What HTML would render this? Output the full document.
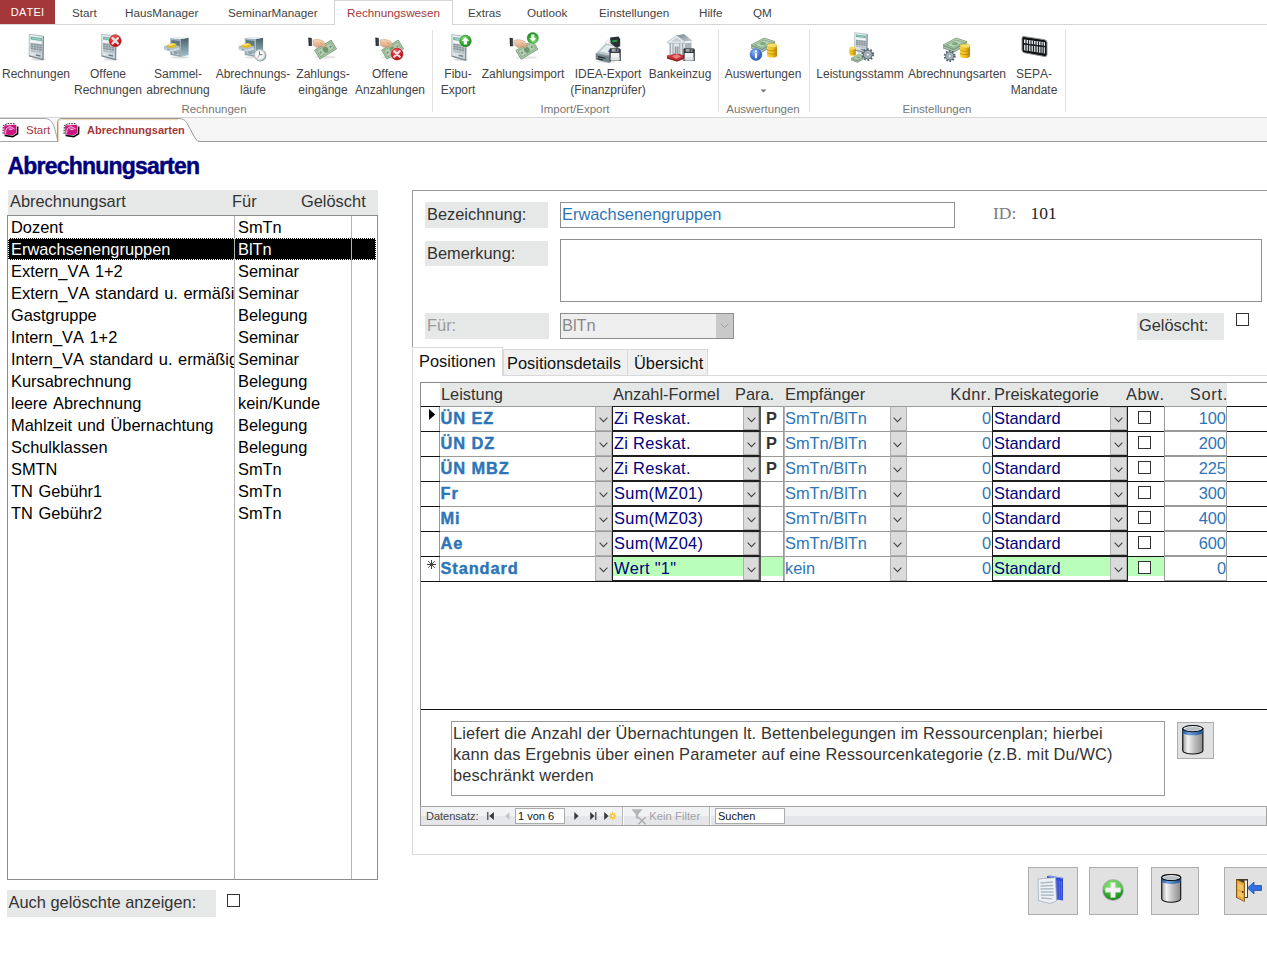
<!DOCTYPE html>
<html>
<head>
<meta charset="utf-8">
<title>Abrechnungsarten</title>
<style>
*{box-sizing:border-box;margin:0;padding:0}
html,body{width:1267px;height:979px;overflow:hidden;background:#fff}
body{font-family:"Liberation Sans",sans-serif;color:#1a1a1a;position:relative;font-kerning:none}
.abs{position:absolute}
/* ribbon */
#rtabs{position:absolute;left:0;top:0;width:1267px;height:25px;border-bottom:1px solid #d4d4d4;background:#fff}
#rtabs span{position:absolute;top:0;height:24px;line-height:25px;font-size:11.7px;color:#444;white-space:nowrap}
#datei{left:0;width:55px;background:#a4373a;color:#fff !important;text-align:center;font-size:11px !important;letter-spacing:0.2px}
#rsel{position:absolute;left:334px;top:0;width:119px;height:26px;border:1px solid #d4d4d4;border-bottom:none;background:#fff}
#ribbon{position:absolute;left:0;top:25px;width:1267px;height:93px;background:#fff}
.rb{position:absolute;top:49px;font-size:12px;line-height:16px;color:#444;text-align:center;white-space:nowrap;transform:translateX(-50%)}
.rg{position:absolute;top:101px;font-size:11.5px;line-height:16px;color:#777;text-align:center;white-space:nowrap;transform:translateX(-50%)}
.rsep{position:absolute;top:30px;width:1px;height:82px;background:#e1e1e1}
.ric{position:absolute;top:32px;width:32px;height:32px}
/* doc tabs */
#dtabs{position:absolute;left:0;top:117px;width:1267px;height:25px;background:#f6f6f6;border-top:1px solid #d6d6d6;border-bottom:1px solid #9b9b9b}
/* form */
.lbl{position:absolute;background:#e6e8e7;font-size:16px;line-height:25px;height:25px;color:#333;padding-left:2px;white-space:nowrap}
.t16{font-size:16px;white-space:nowrap}
</style>
</head>
<body>

<!-- RIBBON TABS -->
<div id="rtabs">
  <span id="datei">DATEI</span>
  <span style="left:72px">Start</span>
  <span style="left:125px">HausManager</span>
  <span style="left:228px">SeminarManager</span>
  <span style="left:599px;display:none"></span>
  <span style="left:468px">Extras</span>
  <span style="left:527px">Outlook</span>
  <span style="left:599px">Einstellungen</span>
  <span style="left:699px">Hilfe</span>
  <span style="left:753px">QM</span>
</div>
<div id="rsel"></div>
<span class="abs" style="left:347px;top:0;height:24px;line-height:25px;font-size:11.7px;color:#a4373a;white-space:nowrap">Rechnungswesen</span>

<!-- RIBBON BODY -->
<div id="ribbon"></div>
<!--RIBBON-ITEMS-START-->
<svg width="0" height="0" style="position:absolute">
<defs>
<linearGradient id="gDoc" x1="0" y1="0" x2="1" y2="1"><stop offset="0" stop-color="#f4f7f8"/><stop offset="1" stop-color="#c4cdd1"/></linearGradient>
<linearGradient id="gCab" x1="0" y1="0" x2="1" y2="0"><stop offset="0" stop-color="#c9d6db"/><stop offset="1" stop-color="#5d7983"/></linearGradient>
<linearGradient id="gCabR" x1="0" y1="0" x2="0" y2="1"><stop offset="0" stop-color="#465d67"/><stop offset="1" stop-color="#a6c6d2"/></linearGradient>
<linearGradient id="gCabF" x1="0" y1="0" x2="0" y2="1"><stop offset="0" stop-color="#dfe7ea"/><stop offset="1" stop-color="#9fb0b7"/></linearGradient>
<radialGradient id="gRed" cx="0.4" cy="0.3" r="0.8"><stop offset="0" stop-color="#f46a6a"/><stop offset="0.6" stop-color="#d8141c"/><stop offset="1" stop-color="#a80d12"/></radialGradient>
<radialGradient id="gGrn" cx="0.4" cy="0.3" r="0.8"><stop offset="0" stop-color="#8ee07a"/><stop offset="0.6" stop-color="#2fa92c"/><stop offset="1" stop-color="#1b7a1e"/></radialGradient>
<radialGradient id="gBlu" cx="0.4" cy="0.3" r="0.8"><stop offset="0" stop-color="#9cc0f5"/><stop offset="0.6" stop-color="#3a6fd0"/><stop offset="1" stop-color="#2450a5"/></radialGradient>
<linearGradient id="gGold" x1="0" y1="0" x2="1" y2="0"><stop offset="0" stop-color="#f7d54a"/><stop offset="0.5" stop-color="#f3c21c"/><stop offset="1" stop-color="#b98608"/></linearGradient>
<linearGradient id="gCuff" x1="0" y1="0" x2="1" y2="0"><stop offset="0" stop-color="#1c1e21"/><stop offset="1" stop-color="#5a6066"/></linearGradient>
<linearGradient id="gSkin" x1="0" y1="0" x2="0" y2="1"><stop offset="0" stop-color="#f8d6b8"/><stop offset="1" stop-color="#d9a37c"/></linearGradient>
<!-- invoice document 16x27 -->
<g id="iDoc">
  <ellipse cx="9.5" cy="25.3" rx="7.5" ry="1.2" fill="#000" opacity="0.13"/>
  <path d="M0.3 0.2 L14.4 2.2 L14 25.7 L0.1 21.8 Z" fill="url(#gDoc)" stroke="#93a3ac" stroke-width="0.7"/>
  <path d="M14.4 2.2 L14 25.7 L0.1 21.8" fill="none" stroke="#7b8b94" stroke-width="1.2"/>
  <path d="M1.6 2.6 L12.8 4.2 L12.8 7 L1.6 5.5 Z" fill="#69b09f"/>
  <path d="M3 3.7 L11.5 4.9 L11.5 6 L3 4.8 Z" fill="#a9d6cb"/>
  <path d="M1.6 6.7 L12.8 8.2 L12.8 9.6 L1.6 8.1 Z" fill="#f8fafb"/>
  <path d="M1.6 9 L12.8 10.5 L12.8 17 L1.6 15.2 Z" fill="#87959b"/>
  <path d="M1.6 11 L12.8 12.6 M1.6 13.1 L12.8 14.8 M4.4 9.4 V15.6 M7.2 9.8 V16.1 M10 10.2 V16.5" stroke="#c5cfd3" stroke-width="0.5" fill="none"/>
  <path d="M1.6 15.6 L12.8 17.4 L12.8 19.6 L1.6 17.8 Z" fill="#b4c0c5"/>
  <path d="M7 20.3 L11.5 21.2 L11.5 22.7 L7 21.7 Z" fill="#6e7b81"/>
</g>
<!-- red X badge r=6.6 -->
<g id="iRedX">
  <circle cx="0" cy="0" r="6.7" fill="#c9c9c9" opacity="0.9"/>
  <circle cx="0" cy="0" r="5.9" fill="url(#gRed)" stroke="#b01016" stroke-width="0.5"/>
  <path d="M-2.7 -2.7 L2.7 2.7 M2.7 -2.7 L-2.7 2.7" stroke="#e4e4e4" stroke-width="2.3" stroke-linecap="round"/>
</g>
<!-- green arrow badge -->
<g id="iGrnUp">
  <circle cx="0" cy="0" r="6.6" fill="#fff" opacity="0.85"/>
  <circle cx="0" cy="0" r="5.9" fill="url(#gGrn)" stroke="#1f7f22" stroke-width="0.5"/>
  <path d="M0 -4 L3.8 0 H1.6 V3.6 H-1.6 V0 H-3.8 Z" fill="#fff"/>
</g>
<!-- cabinet 26x22 -->
<g id="iCab">
  <ellipse cx="16" cy="21.9" rx="9.5" ry="1.2" fill="#000" opacity="0.12"/>
  <path d="M17 3.5 L24.6 2.2 L24.6 19.5 L17 21.6 Z" fill="url(#gCabR)"/>
  <path d="M6.2 2.6 L17 3.5 L17 21.6 L6.2 19.6 Z" fill="#9fb2ba"/>
  <path d="M6.2 2.6 L14 1.2 L24.6 2.2 L17 3.5 Z" fill="#e6eef1"/>
  <path d="M7.5 4.6 L15.8 5.5 L15.8 12 L7.5 11 Z" fill="#60767f"/>
  <path d="M7.5 15.7 L15.8 17.2 L15.8 20.4 L7.5 18.7 Z" fill="#bccacf" stroke="#6f858e" stroke-width="0.5"/>
  <path d="M10 17.3 L13.2 17.9" stroke="#5f757e" stroke-width="0.9"/>
  <path d="M0.5 11 L8 9 L15.6 10.5 L15.6 14.3 L8 16.2 L0.5 13.8 Z" fill="#aebfc6" stroke="#7f949c" stroke-width="0.5"/>
  <path d="M3.1 9.6 L8.6 7.7 L12.3 8.6 L12.3 11 L7 12.6 L3.1 11.4 Z" fill="#e6b917"/>
  <path d="M3.1 9.6 L8.6 7.7 L12.3 8.6 L7 10.4 Z" fill="#fae36c"/>
  <path d="M0.5 11.8 L8 14 L15.6 12 V14.3 L8 16.2 L0.5 13.8 Z" fill="#cbd8dd"/>
  <path d="M2.8 13.4 L5.8 14.3" stroke="#6f858e" stroke-width="0.8"/>
</g>
<!-- clock -->
<g id="iClock">
  <circle cx="0.6" cy="0.4" r="6" fill="#8f989d"/>
  <circle cx="0" cy="0" r="5.4" fill="#dfe4e7" stroke="#b9c0c4" stroke-width="0.8"/>
  <circle cx="-0.3" cy="-0.3" r="4" fill="#f6f8f9"/>
  <path d="M-0.3 -3.6 V-0.3 H2.6" stroke="#5f686d" stroke-width="0.9" fill="none"/>
  <path d="M-0.3 -0.3 L-2.4 3.2" stroke="#c96a6a" stroke-width="0.6" fill="none"/>
</g>
<!-- hand with money 30x22 -->
<g id="iHand">
  <ellipse cx="18" cy="21.3" rx="11" ry="1.4" fill="#000" opacity="0.10"/>
  <g transform="rotate(-31 18.5 13.5)">
    <rect x="8.8" y="8.4" width="19.5" height="10.4" fill="#b4ccb1" stroke="#6b946c" stroke-width="0.7"/>
    <rect x="10.4" y="10" width="16.3" height="7.2" fill="none" stroke="#5e8a60" stroke-width="0.7" stroke-dasharray="1.2 0.6"/>
    <ellipse cx="18.5" cy="13.6" rx="2.7" ry="3" fill="#6c9a6e"/>
    <circle cx="12.8" cy="13.6" r="1" fill="#6b946c"/><circle cx="24.3" cy="13.6" r="1" fill="#6b946c"/>
  </g>
  <g transform="translate(1.3,0.9)">
  <path d="M0 0.5 L3.6 1 L4 9 L0.4 9 Z" fill="url(#gCuff)"/>
  <path d="M3.6 1.6 L5 1.9 L5.3 8.6 L4 8.9 Z" fill="#eef1f3"/>
  <path d="M5 3.1 C8 2 12 2.4 15.3 4.4 L16.8 7 L16.6 10.3 L14.8 10.7 L13.3 8.6 L11 10.3 L8.2 10.4 L5.3 8.4 Z" fill="url(#gSkin)" stroke="#b98762" stroke-width="0.4"/>
  <path d="M11.8 5.6 L14.6 7.6" stroke="#b98762" stroke-width="0.5"/>
  </g>
</g>
<!-- coins -->
<g id="iCoins">
  <path d="M0 2 V12 A5 2 0 0 0 10 12 V2 Z" fill="url(#gGold)"/>
  <path d="M0 5.3 A5 2 0 0 0 10 5.3 M0 8.6 A5 2 0 0 0 10 8.6" stroke="#a87808" stroke-width="0.6" fill="none"/>
  <ellipse cx="5" cy="2" rx="5" ry="2" fill="#fbe26d" stroke="#d9a915" stroke-width="0.5"/>
</g>
<!-- banknote stack -->
<g id="iNotes">
  <path d="M0 7 L13 0 L24 3.5 L24 7 L11 14.5 L0 10.5 Z" fill="#7f9a82"/>
  <path d="M0 7 L13 0 L24 3.5 L11 11 Z" fill="#b9d2b7" stroke="#6d9470" stroke-width="0.6"/>
  <path d="M3.5 7 L13 2 L20.5 4.2 L11 9.5 Z" fill="none" stroke="#6d9470" stroke-width="0.6"/>
  <ellipse cx="12" cy="5.6" rx="3" ry="1.6" fill="#7fa982"/>
  <path d="M0 8.8 L11 12.8 L24 5.3" stroke="#dfe9de" stroke-width="0.6" fill="none"/>
</g>
<!-- gear -->
<g id="iGear">
  <circle cx="0" cy="0" r="5.2" fill="#5d727c" stroke="#44575f" stroke-width="0.5" stroke-dasharray="2 1.3"/>
  <circle cx="0" cy="0" r="6" fill="none" stroke="#4e636d" stroke-width="2" stroke-dasharray="1.9 1.9"/>
  <circle cx="0" cy="0" r="4.2" fill="#a9b5ba"/>
  <circle cx="0" cy="0" r="1.9" fill="#e9eef0" stroke="#5b686d" stroke-width="0.5"/>
</g>
<!-- floppy -->
<g id="iFloppy">
  <path d="M0 0.8 L1 0 H10 L11.4 1.3 V12.8 H0 Z" fill="#33383c"/>
  <rect x="2.2" y="0.5" width="6.8" height="3" fill="#9ea7ac"/>
  <rect x="6.2" y="0.9" width="1.7" height="2.2" fill="#33383c"/>
  <rect x="1.3" y="4.7" width="8.8" height="7.4" fill="#f1f3f4"/>
  <rect x="1.3" y="9" width="8.8" height="3.1" fill="#dfe3e5"/>
</g>
</defs>
</svg>

<!-- icons -->
<svg class="abs" style="left:28px;top:33px" width="18" height="29" viewBox="0 0 18 29"><use href="#iDoc" x="1" y="1"/></svg>
<svg class="abs" style="left:100px;top:32px" width="24" height="30" viewBox="0 0 24 30"><use href="#iDoc" x="1.5" y="2"/><use href="#iRedX" x="15.2" y="8.8"/></svg>
<svg class="abs" style="left:164px;top:35px" width="28" height="24" viewBox="0 0 28 24"><use href="#iCab" y="0.5"/></svg>
<svg class="abs" style="left:238px;top:35px" width="30" height="28" viewBox="0 0 30 28"><use href="#iCab" x="0.5" y="0.5"/><use href="#iClock" x="21.8" y="20"/></svg>
<svg class="abs" style="left:307px;top:36px" width="32" height="24" viewBox="0 0 32 24"><use href="#iHand"/></svg>
<svg class="abs" style="left:374px;top:36px" width="32" height="26" viewBox="0 0 32 26"><use href="#iHand"/><use href="#iRedX" x="23" y="18"/></svg>
<svg class="abs" style="left:449px;top:32px" width="26" height="30" viewBox="0 0 26 30"><use href="#iDoc" x="2.6" y="2.4"/><use href="#iGrnUp" x="16.4" y="9"/></svg>
<svg class="abs" style="left:508px;top:31px" width="32" height="30" viewBox="0 0 32 30"><g transform="translate(0.3,5.3)"><use href="#iHand"/></g><g transform="translate(24.8,7) rotate(180) scale(0.95)"><use href="#iGrnUp"/></g></svg>
<!-- cash register -->
<svg class="abs" style="left:594px;top:34px" width="30" height="30" viewBox="0 0 30 30">
  <ellipse cx="12" cy="27.6" rx="10" ry="1.3" fill="#000" opacity="0.10"/>
  <path d="M15.5 21.5 L24 11.5 L25 19 L15.5 29 Z" fill="#4d5b62"/>
  <path d="M1.7 19 L15.5 21.5 L15.5 29 L1.7 25.5 Z" fill="#74858d"/>
  <path d="M4 22.6 L11.5 24.2 M3.5 24.8 L9 26" stroke="#1d2225" stroke-width="1.1"/>
  <path d="M2.5 18.8 L11.5 9.5 L24 11.5 L15.5 21.5 Z" fill="#bcc7cc"/>
  <path d="M6 17.5 L12.5 11 L20.5 12.5 L14.5 19.3 Z" fill="#e6ebee"/>
  <path d="M2.5 18.8 L15.5 21.5 L15.5 22.6 L1.7 20 Z" fill="#95a3aa"/>
  <path d="M16 3.6 L24.5 2.4 L26.2 5 L26.2 12.3 L22 13.6 L16.5 9.2 Z" fill="#2a3033"/>
  <path d="M17.8 6.4 L23 5.8 L23.5 7.6 L18.4 8.6 Z" fill="#2b9a4b"/>
  <path d="M11 9.2 L13.8 5.6 L16.4 6.1 L14.2 10 Z" fill="#f6f8f9" stroke="#b0babf" stroke-width="0.4"/>
  <circle cx="15.2" cy="17.2" r="1" fill="#3b55d0"/>
  <use href="#iFloppy" x="15.4" y="14.3"/>
</svg>
<!-- bank -->
<svg class="abs" style="left:664px;top:33px" width="32" height="32" viewBox="0 0 32 32">
  <defs><linearGradient id="gRoof" x1="0" y1="0" x2="1" y2="1"><stop offset="0" stop-color="#76868f"/><stop offset="1" stop-color="#c9d2d7"/></linearGradient></defs>
  <path d="M3 22.6 L12 19.5 L22 22 L22 25 L13 28.6 L3 25.4 Z" fill="#c5353a"/>
  <path d="M3 24 L13 27.2 L22 23.6 V25 L13 28.6 L3 25.4 Z" fill="#8f2024"/>
  <path d="M8 23 L13.2 21.2 L17 23.6 L12 25.8 Z" fill="#ea807d"/>
  <path d="M20.5 10 L27.5 9 L27.5 20 L20.5 23 Z" fill="#a9b4ba"/>
  <path d="M5 9.8 H20.5 V22.6 L12.5 20 L5 22.6 Z" fill="#e3e8ea"/>
  <path d="M6.3 10 V22 M9 10 V21.2 M15.8 10 V21 M18.6 10 V22" stroke="#96a3a9" stroke-width="1.1"/>
  <rect x="10.8" y="13.5" width="3.6" height="7.5" fill="#8d999f"/>
  <path d="M12.6 13.5 V21" stroke="#dfe5e8" stroke-width="0.6"/>
  <path d="M12.5 2.5 L20 1 L29 8.2 L21 8.6 Z" fill="url(#gRoof)"/>
  <path d="M3.8 8.6 L12.5 2.5 L21 8.6 L21 10.2 L3.8 10.2 Z" fill="#e9edef" stroke="#9aa6ac" stroke-width="0.6"/>
  <path d="M7 8.6 L12.5 4.7 L18 8.6 Z" fill="#c3ccd1"/>
  <path d="M21 8.6 L29 8.2 L29 9.6 L21 10.2 Z" fill="#f3f6f7"/>
  <use href="#iFloppy" x="19.4" y="15.3"/>
</svg>
<!-- Auswertungen -->
<svg class="abs" style="left:749px;top:37px" width="32" height="28" viewBox="0 0 32 28">
  <use href="#iNotes" x="2" y="1"/><use href="#iCoins" x="18" y="6.5"/>
  <circle cx="7" cy="17.5" r="6.6" fill="#fff" opacity="0.85"/><circle cx="7" cy="17.5" r="5.9" fill="url(#gBlu)" stroke="#2450a5" stroke-width="0.5"/>
  <circle cx="7" cy="14.3" r="1.1" fill="#fff"/><rect x="6" y="16.3" width="2" height="5" fill="#fff"/>
</svg>
<!-- Leistungsstamm -->
<svg class="abs" style="left:848px;top:31px" width="28" height="34" viewBox="0 0 28 34">
  <g transform="translate(6.5,1.5) scale(0.88,0.8)"><use href="#iDoc"/></g>
  <g transform="translate(1.5,16) scale(0.62)"><use href="#iCoins"/></g>
  <g transform="translate(3,23) scale(0.6)"><use href="#iNotes"/></g>
  <g transform="translate(19.8,23.6) scale(0.9)"><use href="#iGear"/></g>
</svg>
<!-- Abrechnungsarten -->
<svg class="abs" style="left:941px;top:36.5px" width="32" height="30" viewBox="0 0 32 30">
  <use href="#iNotes" x="2" y="1"/><use href="#iCoins" x="19" y="7"/>
  <g transform="translate(8.7,19) scale(0.85)"><use href="#iGear"/></g>
</svg>
<!-- SEPA -->
<svg class="abs" style="left:1020px;top:35px" width="30" height="24" viewBox="0 0 30 24">
  <path d="M3.5 1.5 L24.5 4.7 Q27 5.2 27 7.5 L27 19.5 Q27 22 24.5 21.5 L4.5 17.8 Q2 17.3 2 15 L2 3.2 Q2 1.3 3.5 1.5 Z" fill="#111" stroke="#8e9498" stroke-width="1"/>
  <path d="M4 4.5 L25 7.3 V11 L4 8.2 Z" fill="#e9ecee"/>
  <path d="M4 9.5 L25 12.3 V18.5 L4 15.2 Z" fill="#cfd4d7"/>
  <path d="M6 5 V15.6 M8.5 5.3 V16 M11 5.6 V16.4 M13.5 6 V16.8 M16 6.3 V17.2 M18.5 6.6 V17.6 M21 7 V18 M23.2 7.2 V18.3" stroke="#1d1f21" stroke-width="1.1"/>
  <path d="M4 8.2 L25 11 V12.3 L4 9.5 Z" fill="#1d1f21"/>
</svg>

<!-- labels -->
<div class="rb" style="left:36px;top:66px">Rechnungen</div>
<div class="rb" style="left:108px;top:66px">Offene<br>Rechnungen</div>
<div class="rb" style="left:178px;top:66px">Sammel-<br>abrechnung</div>
<div class="rb" style="left:253px;top:66px">Abrechnungs-<br>läufe</div>
<div class="rb" style="left:323px;top:66px">Zahlungs-<br>eingänge</div>
<div class="rb" style="left:390px;top:66px">Offene<br>Anzahlungen</div>
<div class="rb" style="left:458px;top:66px">Fibu-<br>Export</div>
<div class="rb" style="left:523px;top:66px">Zahlungsimport</div>
<div class="rb" style="left:608px;top:66px">IDEA-Export<br>(Finanzprüfer)</div>
<div class="rb" style="left:680px;top:66px">Bankeinzug</div>
<div class="rb" style="left:763px;top:66px">Auswertungen</div>
<div class="rb" style="left:860px;top:66px">Leistungsstamm</div>
<div class="rb" style="left:957px;top:66px">Abrechnungsarten</div>
<div class="rb" style="left:1034px;top:66px">SEPA-<br>Mandate</div>
<svg class="abs" style="left:760px;top:89px" width="7" height="4" viewBox="0 0 7 4"><path d="M0.5 0.5 L3.5 3.5 L6.5 0.5 Z" fill="#777"/></svg>
<div class="rg" style="left:214px">Rechnungen</div>
<div class="rg" style="left:575px">Import/Export</div>
<div class="rg" style="left:763px">Auswertungen</div>
<div class="rg" style="left:937px">Einstellungen</div>
<div class="rsep" style="left:432px"></div>
<div class="rsep" style="left:718px"></div>
<div class="rsep" style="left:809px"></div>
<div class="rsep" style="left:1065px"></div>
<!--RIBBON-ITEMS-END-->

<!-- DOC TABS -->
<div id="dtabs"></div>
<!--DOCTABS-START-->
<svg class="abs" style="left:0;top:117px" width="220" height="26" viewBox="0 0 220 26">
  <!-- start tab -->
  <path d="M-2 1.5 H44 C50 1.5 52 5 54 9 L58 24.5 H-2 Z" fill="#fdfdfd" stroke="#a8a8a8" stroke-width="1"/>
  <!-- active tab -->
  <path d="M57.5 25 V6 C57.5 3 59 1.5 62 1.5 H178 C184 1.5 186 4 188 8 L195 21 C196.5 23.5 198 24.5 201 24.5 H220 V26 H57.5 Z" fill="#ffffff"/>
  <path d="M57.5 25 V6 C57.5 3 59 1.5 62 1.5 H178 C184 1.5 186 4 188 8 L195 21 C196.5 23.5 198 24.5 201 24.5 H220" fill="none" stroke="#9b9b9b" stroke-width="1"/>
  <path d="M58.6 25 V6.5 C58.6 4 60 2.6 62.5 2.6 H178" fill="none" stroke="#ecd2ad" stroke-width="1"/>
  <defs>
    <g id="iForm">
      <path d="M4.6 18.6 L12.8 19.6 L17.6 16.7 L17.7 9.4" fill="none" stroke="#000" stroke-width="1.5"/>
      <path d="M3.1 16.8 L3.3 8.5 L7.5 6.7 L15.5 6.7" fill="none" stroke="#1a1a1a" stroke-width="1" stroke-dasharray="1.6 1"/>
      <path d="M4.1 8.6 L16.3 7.8 L16.5 16.1 L12.6 18.3 L4.3 17.5 Z" fill="#cc1480"/>
      <path d="M5.4 16.5 L6.3 11.6 L9.6 9.4 L14.6 11.9 M9.2 12.7 L12.6 12.3" fill="none" stroke="#f9dcec" stroke-width="0.9"/>
      <path d="M6.8 11.5 L9.6 9.8 L13.2 11.6 L9 12.2 Z" fill="#e96bb4" opacity="0.8"/>
    </g>
  </defs>
  <use href="#iForm" x="0" y="0"/>
  <use href="#iForm" x="61" y="0"/>
</svg>
<div class="abs" style="left:26px;top:122px;font-size:11.5px;line-height:16px;color:#a4373a;white-space:nowrap">Start</div>
<div class="abs" style="left:87px;top:122px;font-size:11px;line-height:16px;font-weight:bold;color:#a4373a;white-space:nowrap">Abrechnungsarten</div>
<!--DOCTABS-END-->

<!-- TITLE -->
<div class="abs" style="left:7.5px;top:153px;font-size:23px;letter-spacing:-0.8px;font-weight:bold;color:#00007b;-webkit-text-stroke:0.45px #00007b;line-height:26px;white-space:nowrap">Abrechnungsarten</div>

<!--LEFTLIST-START-->
<style>
#lhead{position:absolute;left:8px;top:190px;width:370px;height:25px;background:#e6e8e7}
#lhead span{position:absolute;top:0;line-height:23px;font-size:16.4px;color:#333}
#lbox{position:absolute;left:7px;top:215px;width:371px;height:665px;border:1px solid #8c8c8c;background:#fff}
#lbox .c1,#lbox .c2{position:absolute;top:0;bottom:0;width:1px;background:#b4b4b4}
.lr{position:absolute;left:0;width:368px;height:21.4px;font-size:16.4px;line-height:23px;word-spacing:1px;color:#000;white-space:nowrap}
.lr b{font-weight:normal;position:absolute;left:3px;top:0;width:223px;overflow:hidden;height:22px}
.lr i{font-style:normal;position:absolute;left:230px;top:0}
.lr.sel{background:#000;color:#fff;outline:1px dotted #fff;outline-offset:-1px}
</style>
<div id="lhead"><span style="left:2px">Abrechnungsart</span><span style="left:224px">Für</span><span style="left:293px">Gelöscht</span></div>
<div id="lbox">
<div class="lr" style="top:0.4px"><b>Dozent</b><i>SmTn</i></div>
<div class="lr sel" style="top:22.4px"><b>Erwachsenengruppen</b><i>BlTn</i></div>
<div class="lr" style="top:44.4px"><b>Extern_VA 1+2</b><i>Seminar</i></div>
<div class="lr" style="top:66.4px"><b>Extern_VA standard u. ermäßigt</b><i>Seminar</i></div>
<div class="lr" style="top:88.4px"><b>Gastgruppe</b><i>Belegung</i></div>
<div class="lr" style="top:110.4px"><b>Intern_VA 1+2</b><i>Seminar</i></div>
<div class="lr" style="top:132.4px"><b>Intern_VA standard u. ermäßigt</b><i>Seminar</i></div>
<div class="lr" style="top:154.4px"><b>Kursabrechnung</b><i>Belegung</i></div>
<div class="lr" style="top:176.4px"><b>leere Abrechnung</b><i>kein/Kunde</i></div>
<div class="lr" style="top:198.4px"><b>Mahlzeit und Übernachtung</b><i>Belegung</i></div>
<div class="lr" style="top:220.4px"><b>Schulklassen</b><i>Belegung</i></div>
<div class="lr" style="top:242.4px"><b>SMTN</b><i>SmTn</i></div>
<div class="lr" style="top:264.4px"><b>TN Gebühr1</b><i>SmTn</i></div>
<div class="lr" style="top:286.4px"><b>TN Gebühr2</b><i>SmTn</i></div>
<div class="c1" style="left:226px"></div><div class="c2" style="left:343px"></div>
</div>
<div class="lbl" style="left:7px;top:890px;width:209px;height:27px;line-height:25px;font-size:16.4px;padding-left:1.5px">Auch gelöschte anzeigen:</div>
<div class="abs" style="left:227px;top:894px;width:13px;height:13px;border:1px solid #333;background:#fff"></div>
<!--LEFTLIST-END-->

<!--RIGHTPANEL-START-->
<style>
#rp{position:absolute;left:412px;top:190px;width:900px;height:158px;border:1px solid #9a9a9a;border-bottom:none;background:#fff}
#tp{position:absolute;left:412px;top:348px;width:900px;height:507px;border:1px solid #d9d9d9;border-top:none;background:#fff}
.inp{position:absolute;border:1px solid #8e8e8e;background:#fff;font-size:16.4px;white-space:nowrap}
.tab{position:absolute;font-size:16.4px;color:#111;white-space:nowrap;text-align:left}
</style>
<div id="rp"></div><div id="tp"></div>
<div class="lbl" style="left:425px;top:202px;width:123px;height:26px;font-size:16.4px">Bezeichnung:</div>
<div class="inp" style="left:560px;top:202px;width:395px;height:26px;line-height:23px;padding-left:1px;color:#2e75b6">Erwachsenengruppen</div>
<div class="abs" style="left:993px;top:202px;font-family:'Liberation Serif',serif;font-size:17.5px;line-height:22px;color:#7a7a7a;white-space:nowrap">ID:</div>
<div class="abs" style="left:1030.5px;top:202px;font-family:'Liberation Serif',serif;font-size:17.5px;line-height:22px;color:#222;white-space:nowrap">101</div>
<div class="lbl" style="left:425px;top:241px;width:123px;height:25px;font-size:16.4px;line-height:24px">Bemerkung:</div>
<div class="inp" style="left:560px;top:239px;width:702px;height:63px"></div>
<div class="lbl" style="left:425px;top:313px;width:124px;height:26px;font-size:16.4px;color:#9a9a9a">Für:</div>
<div class="inp" style="left:560px;top:313px;width:174px;height:26px;line-height:23px;padding-left:1px;background:#efefef;color:#8a8a8a">BlTn</div>
<div class="abs" style="left:716px;top:314px;width:17px;height:24px;background:#c9c9c9"></div>
<svg class="abs" style="left:720px;top:323px" width="9" height="6" viewBox="0 0 9 6"><path d="M0.7 0.8 L4.5 4.6 L8.3 0.8" fill="none" stroke="#9e9e9e" stroke-width="1"/></svg>
<div class="lbl" style="left:1137px;top:313px;width:87px;height:27px;font-size:16.4px">Gelöscht:</div>
<div class="abs" style="left:1236px;top:313px;width:13px;height:13px;border:1px solid #333;background:#fff"></div>

<!-- tab control -->
<div class="abs" style="left:412px;top:375px;width:860px;height:1px;background:#d9d9d9"></div>
<div class="tab" style="left:503px;top:349px;width:125px;height:27px;background:#f0f0f0;border:1px solid #d9d9d9;line-height:27px;padding-left:3px">Positionsdetails</div>
<div class="tab" style="left:627px;top:349px;width:81px;height:27px;background:#f0f0f0;border:1px solid #d9d9d9;line-height:27px;padding-left:6px">Übersicht</div>
<div class="tab" style="left:412px;top:347px;width:91px;height:29px;background:#fff;border:1px solid #d9d9d9;border-bottom:none;line-height:27px;padding-left:6px">Positionen</div>
<!--RIGHTPANEL-END-->

<!--SUBFORM-START-->
<style>
#sf{position:absolute;left:420px;top:382px;width:860px;height:444px;border-left:1px solid #8a8a8a;border-top:1px solid #8a8a8a;background:#fff}
#sfh{position:absolute;left:440px;top:383px;width:787px;height:23px;background:#e6e8e7}
#sfh span{position:absolute;top:0;line-height:23px;font-size:16.4px;color:#333;white-space:nowrap}
.r{position:absolute;left:421px;width:846px;height:25px;font-size:16.4px;line-height:23px;white-space:nowrap;border-top:1px solid #111;background:#fff}
.r>div{position:absolute;top:-1px;height:25px}
.r .sel{left:0;width:19px;border-right:1px solid #9a9a9a;top:0;height:24px}
.r .c{border-top:1px solid #9b9b9b;background:#fff;overflow:hidden}
.r .dk{border:1px solid #1e1e1e;color:#00007b;line-height:22px;padding-left:1px;background:#fff;overflow:hidden}
.r .bl{color:#2e75b6}
.r .bb{color:#2e75b6;font-weight:bold;letter-spacing:0.9px;-webkit-text-stroke:0.4px #2e75b6}
.r .btn{background:#dbdbdb;border:1px solid #b0b0b0;border-top:1px solid #9b9b9b}
.r svg{position:absolute;top:10px}
.r .cb{position:absolute;left:10px;top:4px;width:13px;height:13px;border:1px solid #333;background:#fff}
.r .num{text-align:right;color:#2e75b6}
.g{background:linear-gradient(to bottom,#b9ffb9 0,#b9ffb9 19px,#fff 19px) !important}
</style>
<div id="sf"></div>
<div id="sfh"><span style="left:1px">Leistung</span><span style="left:173px">Anzahl-Formel</span><span style="left:295px">Para.</span><span style="left:345px">Empfänger</span><span style="left:510.3px;letter-spacing:0.4px">Kdnr.</span><span style="left:554px">Preiskategorie</span><span style="left:686px;letter-spacing:0.5px">Abw.</span><span style="left:749.8px;letter-spacing:0.7px">Sort.</span></div>
<div class="r" style="top:406px"><div class="sel"></div><div class="c bb" style="left:19px;width:155px;padding-left:0.5px">ÜN EZ</div><div class="btn" style="left:174px;width:17px"></div><div class="dk" style="left:191px;width:149px;border-right:2px solid #5a5a5a;letter-spacing:0.3px">Zi Reskat.</div><div class="btn" style="left:322px;width:16px;top:0;height:23px;border-top-color:#c4c4c4"></div><div class="c" style="left:340px;width:23px;font-weight:bold;color:#333;padding-left:5px;border-right:1px solid #9b9b9b">P</div><div class="c bl" style="left:363px;width:106px;padding-left:0;border-left:1px solid #b5b5b5">SmTn/BlTn</div><div class="btn" style="left:469px;width:17px"></div><div class="c num" style="left:486px;width:85px;padding-right:1px">0</div><div class="dk" style="left:571px;width:136px">Standard</div><div class="btn" style="left:689px;width:17px;top:0;height:23px;border-top-color:#c4c4c4"></div><div class="" style="left:707px;width:36px;top:0;height:24px"><span class="cb"></span></div><div class="c num" style="left:743px;width:63px;border:1px solid #9b9b9b;padding-right:0;line-height:22px">100</div><svg style="left:177.8px" width="9" height="6" viewBox="0 0 9 6"><path d="M0.6 0.7 L4.5 4.6 L8.4 0.7" fill="none" stroke="#444" stroke-width="1.1"/></svg><svg style="left:325.5px" width="9" height="6" viewBox="0 0 9 6"><path d="M0.6 0.7 L4.5 4.6 L8.4 0.7" fill="none" stroke="#444" stroke-width="1.1"/></svg><svg style="left:472px" width="9" height="6" viewBox="0 0 9 6"><path d="M0.6 0.7 L4.5 4.6 L8.4 0.7" fill="none" stroke="#444" stroke-width="1.1"/></svg><svg style="left:693px" width="9" height="6" viewBox="0 0 9 6"><path d="M0.6 0.7 L4.5 4.6 L8.4 0.7" fill="none" stroke="#444" stroke-width="1.1"/></svg></div>
<div class="r" style="top:431px"><div class="sel"></div><div class="c bb" style="left:19px;width:155px;padding-left:0.5px">ÜN DZ</div><div class="btn" style="left:174px;width:17px"></div><div class="dk" style="left:191px;width:149px;border-right:2px solid #5a5a5a;letter-spacing:0.3px">Zi Reskat.</div><div class="btn" style="left:322px;width:16px;top:0;height:23px;border-top-color:#c4c4c4"></div><div class="c" style="left:340px;width:23px;font-weight:bold;color:#333;padding-left:5px;border-right:1px solid #9b9b9b">P</div><div class="c bl" style="left:363px;width:106px;padding-left:0;border-left:1px solid #b5b5b5">SmTn/BlTn</div><div class="btn" style="left:469px;width:17px"></div><div class="c num" style="left:486px;width:85px;padding-right:1px">0</div><div class="dk" style="left:571px;width:136px">Standard</div><div class="btn" style="left:689px;width:17px;top:0;height:23px;border-top-color:#c4c4c4"></div><div class="" style="left:707px;width:36px;top:0;height:24px"><span class="cb"></span></div><div class="c num" style="left:743px;width:63px;border:1px solid #9b9b9b;padding-right:0;line-height:22px">200</div><svg style="left:177.8px" width="9" height="6" viewBox="0 0 9 6"><path d="M0.6 0.7 L4.5 4.6 L8.4 0.7" fill="none" stroke="#444" stroke-width="1.1"/></svg><svg style="left:325.5px" width="9" height="6" viewBox="0 0 9 6"><path d="M0.6 0.7 L4.5 4.6 L8.4 0.7" fill="none" stroke="#444" stroke-width="1.1"/></svg><svg style="left:472px" width="9" height="6" viewBox="0 0 9 6"><path d="M0.6 0.7 L4.5 4.6 L8.4 0.7" fill="none" stroke="#444" stroke-width="1.1"/></svg><svg style="left:693px" width="9" height="6" viewBox="0 0 9 6"><path d="M0.6 0.7 L4.5 4.6 L8.4 0.7" fill="none" stroke="#444" stroke-width="1.1"/></svg></div>
<div class="r" style="top:456px"><div class="sel"></div><div class="c bb" style="left:19px;width:155px;padding-left:0.5px">ÜN MBZ</div><div class="btn" style="left:174px;width:17px"></div><div class="dk" style="left:191px;width:149px;border-right:2px solid #5a5a5a;letter-spacing:0.3px">Zi Reskat.</div><div class="btn" style="left:322px;width:16px;top:0;height:23px;border-top-color:#c4c4c4"></div><div class="c" style="left:340px;width:23px;font-weight:bold;color:#333;padding-left:5px;border-right:1px solid #9b9b9b">P</div><div class="c bl" style="left:363px;width:106px;padding-left:0;border-left:1px solid #b5b5b5">SmTn/BlTn</div><div class="btn" style="left:469px;width:17px"></div><div class="c num" style="left:486px;width:85px;padding-right:1px">0</div><div class="dk" style="left:571px;width:136px">Standard</div><div class="btn" style="left:689px;width:17px;top:0;height:23px;border-top-color:#c4c4c4"></div><div class="" style="left:707px;width:36px;top:0;height:24px"><span class="cb"></span></div><div class="c num" style="left:743px;width:63px;border:1px solid #9b9b9b;padding-right:0;line-height:22px">225</div><svg style="left:177.8px" width="9" height="6" viewBox="0 0 9 6"><path d="M0.6 0.7 L4.5 4.6 L8.4 0.7" fill="none" stroke="#444" stroke-width="1.1"/></svg><svg style="left:325.5px" width="9" height="6" viewBox="0 0 9 6"><path d="M0.6 0.7 L4.5 4.6 L8.4 0.7" fill="none" stroke="#444" stroke-width="1.1"/></svg><svg style="left:472px" width="9" height="6" viewBox="0 0 9 6"><path d="M0.6 0.7 L4.5 4.6 L8.4 0.7" fill="none" stroke="#444" stroke-width="1.1"/></svg><svg style="left:693px" width="9" height="6" viewBox="0 0 9 6"><path d="M0.6 0.7 L4.5 4.6 L8.4 0.7" fill="none" stroke="#444" stroke-width="1.1"/></svg></div>
<div class="r" style="top:481px"><div class="sel"></div><div class="c bb" style="left:19px;width:155px;padding-left:0.5px">Fr</div><div class="btn" style="left:174px;width:17px"></div><div class="dk" style="left:191px;width:149px;border-right:2px solid #5a5a5a;letter-spacing:0.3px">Sum(MZ01)</div><div class="btn" style="left:322px;width:16px;top:0;height:23px;border-top-color:#c4c4c4"></div><div class="c" style="left:340px;width:23px;font-weight:bold;color:#333;padding-left:5px;border-right:1px solid #9b9b9b"></div><div class="c bl" style="left:363px;width:106px;padding-left:0;border-left:1px solid #b5b5b5">SmTn/BlTn</div><div class="btn" style="left:469px;width:17px"></div><div class="c num" style="left:486px;width:85px;padding-right:1px">0</div><div class="dk" style="left:571px;width:136px">Standard</div><div class="btn" style="left:689px;width:17px;top:0;height:23px;border-top-color:#c4c4c4"></div><div class="" style="left:707px;width:36px;top:0;height:24px"><span class="cb"></span></div><div class="c num" style="left:743px;width:63px;border:1px solid #9b9b9b;padding-right:0;line-height:22px">300</div><svg style="left:177.8px" width="9" height="6" viewBox="0 0 9 6"><path d="M0.6 0.7 L4.5 4.6 L8.4 0.7" fill="none" stroke="#444" stroke-width="1.1"/></svg><svg style="left:325.5px" width="9" height="6" viewBox="0 0 9 6"><path d="M0.6 0.7 L4.5 4.6 L8.4 0.7" fill="none" stroke="#444" stroke-width="1.1"/></svg><svg style="left:472px" width="9" height="6" viewBox="0 0 9 6"><path d="M0.6 0.7 L4.5 4.6 L8.4 0.7" fill="none" stroke="#444" stroke-width="1.1"/></svg><svg style="left:693px" width="9" height="6" viewBox="0 0 9 6"><path d="M0.6 0.7 L4.5 4.6 L8.4 0.7" fill="none" stroke="#444" stroke-width="1.1"/></svg></div>
<div class="r" style="top:506px"><div class="sel"></div><div class="c bb" style="left:19px;width:155px;padding-left:0.5px">Mi</div><div class="btn" style="left:174px;width:17px"></div><div class="dk" style="left:191px;width:149px;border-right:2px solid #5a5a5a;letter-spacing:0.3px">Sum(MZ03)</div><div class="btn" style="left:322px;width:16px;top:0;height:23px;border-top-color:#c4c4c4"></div><div class="c" style="left:340px;width:23px;font-weight:bold;color:#333;padding-left:5px;border-right:1px solid #9b9b9b"></div><div class="c bl" style="left:363px;width:106px;padding-left:0;border-left:1px solid #b5b5b5">SmTn/BlTn</div><div class="btn" style="left:469px;width:17px"></div><div class="c num" style="left:486px;width:85px;padding-right:1px">0</div><div class="dk" style="left:571px;width:136px">Standard</div><div class="btn" style="left:689px;width:17px;top:0;height:23px;border-top-color:#c4c4c4"></div><div class="" style="left:707px;width:36px;top:0;height:24px"><span class="cb"></span></div><div class="c num" style="left:743px;width:63px;border:1px solid #9b9b9b;padding-right:0;line-height:22px">400</div><svg style="left:177.8px" width="9" height="6" viewBox="0 0 9 6"><path d="M0.6 0.7 L4.5 4.6 L8.4 0.7" fill="none" stroke="#444" stroke-width="1.1"/></svg><svg style="left:325.5px" width="9" height="6" viewBox="0 0 9 6"><path d="M0.6 0.7 L4.5 4.6 L8.4 0.7" fill="none" stroke="#444" stroke-width="1.1"/></svg><svg style="left:472px" width="9" height="6" viewBox="0 0 9 6"><path d="M0.6 0.7 L4.5 4.6 L8.4 0.7" fill="none" stroke="#444" stroke-width="1.1"/></svg><svg style="left:693px" width="9" height="6" viewBox="0 0 9 6"><path d="M0.6 0.7 L4.5 4.6 L8.4 0.7" fill="none" stroke="#444" stroke-width="1.1"/></svg></div>
<div class="r" style="top:531px"><div class="sel"></div><div class="c bb" style="left:19px;width:155px;padding-left:0.5px">Ae</div><div class="btn" style="left:174px;width:17px"></div><div class="dk" style="left:191px;width:149px;border-right:2px solid #5a5a5a;letter-spacing:0.3px">Sum(MZ04)</div><div class="btn" style="left:322px;width:16px;top:0;height:23px;border-top-color:#c4c4c4"></div><div class="c" style="left:340px;width:23px;font-weight:bold;color:#333;padding-left:5px;border-right:1px solid #9b9b9b"></div><div class="c bl" style="left:363px;width:106px;padding-left:0;border-left:1px solid #b5b5b5">SmTn/BlTn</div><div class="btn" style="left:469px;width:17px"></div><div class="c num" style="left:486px;width:85px;padding-right:1px">0</div><div class="dk" style="left:571px;width:136px">Standard</div><div class="btn" style="left:689px;width:17px;top:0;height:23px;border-top-color:#c4c4c4"></div><div class="" style="left:707px;width:36px;top:0;height:24px"><span class="cb"></span></div><div class="c num" style="left:743px;width:63px;border:1px solid #9b9b9b;padding-right:0;line-height:22px">600</div><svg style="left:177.8px" width="9" height="6" viewBox="0 0 9 6"><path d="M0.6 0.7 L4.5 4.6 L8.4 0.7" fill="none" stroke="#444" stroke-width="1.1"/></svg><svg style="left:325.5px" width="9" height="6" viewBox="0 0 9 6"><path d="M0.6 0.7 L4.5 4.6 L8.4 0.7" fill="none" stroke="#444" stroke-width="1.1"/></svg><svg style="left:472px" width="9" height="6" viewBox="0 0 9 6"><path d="M0.6 0.7 L4.5 4.6 L8.4 0.7" fill="none" stroke="#444" stroke-width="1.1"/></svg><svg style="left:693px" width="9" height="6" viewBox="0 0 9 6"><path d="M0.6 0.7 L4.5 4.6 L8.4 0.7" fill="none" stroke="#444" stroke-width="1.1"/></svg></div>
<div class="r" style="top:556px"><div class="sel"></div><div class="c bb" style="left:19px;width:155px;padding-left:0.5px">Standard</div><div class="btn" style="left:174px;width:17px"></div><div class="dk g" style="left:191px;width:149px;border-right:2px solid #5a5a5a;letter-spacing:0.3px">Wert "1"</div><div class="btn" style="left:322px;width:16px;top:0;height:23px;border-top-color:#c4c4c4"></div><div class="c g" style="left:340px;width:23px;font-weight:bold;color:#333;padding-left:5px;border-right:1px solid #9b9b9b"></div><div class="c bl" style="left:363px;width:106px;padding-left:0;border-left:1px solid #b5b5b5">kein</div><div class="btn" style="left:469px;width:17px"></div><div class="c num" style="left:486px;width:85px;padding-right:1px">0</div><div class="dk g" style="left:571px;width:136px">Standard</div><div class="btn" style="left:689px;width:17px;top:0;height:23px;border-top-color:#c4c4c4"></div><div class="g" style="left:707px;width:36px;top:0;height:24px"><span class="cb"></span></div><div class="c num" style="left:743px;width:63px;border:1px solid #9b9b9b;padding-right:0;line-height:22px">0</div><svg style="left:177.8px" width="9" height="6" viewBox="0 0 9 6"><path d="M0.6 0.7 L4.5 4.6 L8.4 0.7" fill="none" stroke="#444" stroke-width="1.1"/></svg><svg style="left:325.5px" width="9" height="6" viewBox="0 0 9 6"><path d="M0.6 0.7 L4.5 4.6 L8.4 0.7" fill="none" stroke="#444" stroke-width="1.1"/></svg><svg style="left:472px" width="9" height="6" viewBox="0 0 9 6"><path d="M0.6 0.7 L4.5 4.6 L8.4 0.7" fill="none" stroke="#444" stroke-width="1.1"/></svg><svg style="left:693px" width="9" height="6" viewBox="0 0 9 6"><path d="M0.6 0.7 L4.5 4.6 L8.4 0.7" fill="none" stroke="#444" stroke-width="1.1"/></svg></div>
<div class="abs" style="left:421px;top:581px;width:846px;height:1px;background:#111"></div>
<svg class="abs" style="left:429px;top:409px" width="7" height="11" viewBox="0 0 7 11"><path d="M0 0 L6.2 5.5 L0 11 Z" fill="#000"/></svg>
<svg class="abs" style="left:426px;top:559px" width="11" height="11" viewBox="0 0 11 11"><path d="M5.5 1 V10 M1 5.5 H10 M2.3 2.3 L8.7 8.7 M8.7 2.3 L2.3 8.7" stroke="#444" stroke-width="1"/><circle cx="5.5" cy="5.5" r="1.3" fill="#444"/></svg>
<div class="abs" style="left:421px;top:709px;width:846px;height:1px;background:#111"></div>
<div class="abs" style="left:451px;top:721px;width:714px;height:75px;border:1px solid #999;background:#fff;font-size:16.4px;line-height:21px;color:#333;padding:1px 0 0 1px;white-space:nowrap;letter-spacing:0.13px">Liefert die Anzahl der Übernachtungen lt. Bettenbelegungen im Ressourcenplan; hierbei<br>kann das Ergebnis über einen Parameter auf eine Ressourcenkategorie (z.B. mit Du/WC)<br>beschränkt werden</div>
<!--SUBFORM-END-->

<!--BOTTOM-START-->
<style>
#nav{position:absolute;left:420px;top:806px;width:847px;height:20px;border:1px solid #a3a3a3;background:linear-gradient(#f1f2f4 0,#f1f2f4 9px,#e4e6e9 9px,#e4e6e9 100%);font-size:11px;color:#444}
#nav span{position:absolute;top:0;line-height:18px;white-space:nowrap}
#nav .bx{position:absolute;top:1px;height:16px;border:1px solid #ababab;background:#fff;line-height:14px;padding-left:2px;color:#111}
#nav .sp{position:absolute;top:0;width:2px;height:18px;background:linear-gradient(to right,#b9b9b9 0,#b9b9b9 1px,#fafafa 1px)}
.bbtn{position:absolute;top:867px;height:48px;background:#e1e1e1;border:1px solid #adadad}
</style>
<div id="nav">
<span style="left:5px">Datensatz:</span>
<svg class="abs" style="left:65.5px;top:4.5px" width="8" height="8" viewBox="0 0 8 8"><rect x="0.2" y="0" width="1.2" height="8" fill="#3a3a3a"/><path d="M6.9 0 L2.2 4 L6.9 8 Z" fill="#3a3a3a"/></svg>
<svg class="abs" style="left:84px;top:4.5px" width="5" height="8" viewBox="0 0 5 8"><path d="M4.4 0.3 L0.3 4 L4.4 7.7 Z" fill="#c3c3c3"/></svg>
<div class="bx" style="left:94px;width:50px">1 von 6</div>
<svg class="abs" style="left:153px;top:4.5px" width="5" height="8" viewBox="0 0 5 8"><path d="M0.3 0 L4.6 4 L0.3 8 Z" fill="#3a3a3a"/></svg>
<svg class="abs" style="left:169px;top:4.5px" width="8" height="8" viewBox="0 0 8 8"><path d="M0.2 0 L4.6 4 L0.2 8 Z" fill="#3a3a3a"/><rect x="5.2" y="0" width="1.2" height="8" fill="#3a3a3a"/></svg>
<svg class="abs" style="left:183px;top:4.5px" width="14" height="8" viewBox="0 0 14 8"><path d="M0.2 0 L4.6 4 L0.2 8 Z" fill="#3a3a3a"/><path d="M8.6 0.3 V7.7 M5.2 4 H12.2 M6.2 1.4 L11.2 6.6 M11.2 1.4 L6.2 6.6" stroke="#f2c531" stroke-width="1.3"/><rect x="7.7" y="3.1" width="1.9" height="1.9" fill="#fff8d6"/></svg>
<div class="sp" style="left:201px"></div>
<svg class="abs" style="left:209.5px;top:2px" width="17" height="16" viewBox="0 0 17 16"><path d="M0.5 0.3 H11.5 L7.3 5.3 V10.3 L4.7 9 V5.3 Z" fill="#b6b6b6"/><path d="M7.3 8.3 L14.7 15.2 M14.7 8.3 L7.3 15.2" stroke="#ababab" stroke-width="1.4"/></svg>
<span style="left:228.3px;color:#a3a3a3;font-size:11.3px">Kein Filter</span>
<div class="sp" style="left:288px"></div>
<div class="bx" style="left:294px;width:70px">Suchen</div>
</div>

<!-- small delete button -->
<div class="abs" style="left:1177px;top:722px;width:37px;height:37px;background:#e1e1e1;border:1px solid #adadad"></div>
<svg width="0" height="0" style="position:absolute"><defs>
<linearGradient id="gCan" x1="0" y1="0" x2="1" y2="0"><stop offset="0" stop-color="#9a9a9a"/><stop offset="0.25" stop-color="#f4f4f4"/><stop offset="0.55" stop-color="#c4c4c4"/><stop offset="1" stop-color="#8a8a8a"/></linearGradient>
<linearGradient id="gCanB" x1="0" y1="0" x2="1" y2="0"><stop offset="0" stop-color="#1d4f96"/><stop offset="0.3" stop-color="#6ea2e0"/><stop offset="1" stop-color="#1d4f96"/></linearGradient>
<g id="iCan">
  <path d="M0.7 3.5 V25 A9.5 3.2 0 0 0 19.7 25 V3.5 Z" fill="url(#gCan)" stroke="#111" stroke-width="1.1"/>
  <path d="M0.7 3.5 V7 A9.5 3 0 0 0 19.7 7 V3.5 Z" fill="url(#gCanB)"/>
  <ellipse cx="10.2" cy="3.5" rx="9.5" ry="3" fill="#e9edf0" stroke="#111" stroke-width="1.1"/>
  <ellipse cx="10.2" cy="3.8" rx="7.5" ry="1.9" fill="#b9c0c5"/>
</g>
</defs></svg>
<svg class="abs" style="left:1181.5px;top:724.5px" width="23" height="31" viewBox="0 0 23 31"><use href="#iCan" transform="scale(1.06,1.03)"/></svg>

<!-- bottom buttons -->
<div class="bbtn" style="left:1028px;width:50px"></div>
<div class="bbtn" style="left:1089px;width:49px"></div>
<div class="bbtn" style="left:1151px;width:48px"></div>
<div class="bbtn" style="left:1224px;width:50px"></div>
<!-- copy icon -->
<svg class="abs" style="left:1036px;top:874px" width="30" height="32" viewBox="0 0 30 32">
  <path d="M11 2 L27 4.5 L27 26.5 L11 24 Z" fill="#2f49d1"/>
  <path d="M11 2 L14 1.5 L28.5 4 L27 4.5 Z" fill="#6b86ef"/>
  <path d="M21 6 V26 M23.3 6.5 V26 M25.4 7 V26.2" stroke="#5a73e8" stroke-width="1"/>
  <path d="M2 5 L19.5 3.5 L20.5 27 L14 29.5 L2.5 26.5 Z" fill="#edf2f6" stroke="#9fb0bb" stroke-width="0.8"/>
  <path d="M4.5 9 L17 8 M4.5 12 L17 11.5 M4.5 15 L17.5 14.8 M4.8 18 L17.5 18 M4.8 21 L17.8 21.3 M5 24 L16 24.8" stroke="#aebbc4" stroke-width="1.5"/>
</svg>
<!-- plus icon -->
<svg class="abs" style="left:1101px;top:878px" width="24" height="24" viewBox="0 0 24 24">
  <circle cx="12" cy="12" r="11" fill="#c9b6cf"/>
  <circle cx="12" cy="12" r="10.2" fill="url(#gGrn)"/>
  <path d="M1.8 12 A10.2 10.2 0 0 1 22.2 12 Q12 15.5 1.8 12 Z" fill="#7fe070" opacity="0.55"/>
  <path d="M9.7 4.5 H14.3 V9.7 H19.5 V14.3 H14.3 V19.5 H9.7 V14.3 H4.5 V9.7 H9.7 Z" fill="#f3f3f3" stroke="#d2d2d2" stroke-width="0.4"/>
</svg>
<svg class="abs" style="left:1161px;top:874px" width="22" height="31" viewBox="0 0 22 31"><use href="#iCan"/></svg>
<!-- door icon -->
<svg class="abs" style="left:1234px;top:877px" width="30" height="26" viewBox="0 0 30 26">
  <path d="M2 2 H14 V21 H2 Z" fill="#4a3a2a"/>
  <path d="M10.5 3.5 H13 V20 H10.5 Z" fill="#f6f3ea"/>
  <path d="M2.5 2.5 L10.5 6 V24.5 L2.5 20.5 Z" fill="#e9a93a" stroke="#7a5516" stroke-width="0.8"/>
  <path d="M4 6 L9 8.3 V14 L4 12 Z M4 14 L9 16 V21 L4 18.8 Z" fill="#f4c25e"/>
  <circle cx="8.8" cy="15" r="0.9" fill="#3a2a10"/>
  <path d="M13.5 11 L20 5 V8.5 H27.5 V13.5 H20 V17 Z" fill="#2f6fdf" stroke="#1d4fb0" stroke-width="0.8"/>
</svg>
<!--BOTTOM-END-->

</body>
</html>
